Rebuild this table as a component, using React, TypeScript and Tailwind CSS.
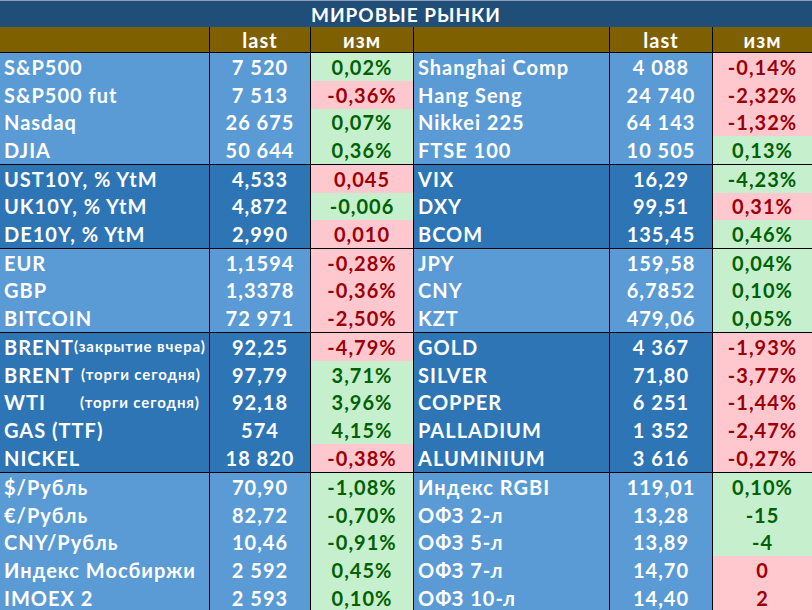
import React from "react";

type Row = {
  name: React.ReactNode;
  last: string;
  chg: string;
  up: boolean;
};

type Group = {
  dark: boolean;
  height: string;
  left: Row[];
  right: Row[];
};

const groups: Group[] = [
  {
    dark: false,
    height: "h-[112px]",
    left: [
      { name: "S&P500", last: "7 520", chg: "0,02%", up: true },
      { name: "S&P500 fut", last: "7 513", chg: "-0,36%", up: false },
      { name: "Nasdaq", last: "26 675", chg: "0,07%", up: true },
      { name: "DJIA", last: "50 644", chg: "0,36%", up: true },
    ],
    right: [
      { name: "Shanghai Comp", last: "4 088", chg: "-0,14%", up: false },
      { name: "Hang Seng", last: "24 740", chg: "-2,32%", up: false },
      { name: "Nikkei 225", last: "64 143", chg: "-1,32%", up: false },
      { name: "FTSE 100", last: "10 505", chg: "0,13%", up: true },
    ],
  },
  {
    dark: true,
    height: "h-[84px]",
    left: [
      { name: "UST10Y, % YtM", last: "4,533", chg: "0,045", up: false },
      { name: "UK10Y, % YtM", last: "4,872", chg: "-0,006", up: true },
      { name: "DE10Y, % YtM", last: "2,990", chg: "0,010", up: false },
    ],
    right: [
      { name: "VIX", last: "16,29", chg: "-4,23%", up: true },
      { name: "DXY", last: "99,51", chg: "0,31%", up: false },
      { name: "BCOM", last: "135,45", chg: "0,46%", up: true },
    ],
  },
  {
    dark: false,
    height: "h-[84px]",
    left: [
      { name: "EUR", last: "1,1594", chg: "-0,28%", up: false },
      { name: "GBP", last: "1,3378", chg: "-0,36%", up: false },
      { name: "BITCOIN", last: "72 971", chg: "-2,50%", up: false },
    ],
    right: [
      { name: "JPY", last: "159,58", chg: "0,04%", up: true },
      { name: "CNY", last: "6,7852", chg: "0,10%", up: true },
      { name: "KZT", last: "479,06", chg: "0,05%", up: true },
    ],
  },
  {
    dark: true,
    height: "h-[140px]",
    left: [
      {
        name: (
          <>
            BRENT<span className="text-[15px] tracking-[0.9px]">(закрытие вчера)</span>
          </>
        ),
        last: "92,25",
        chg: "-4,79%",
        up: false,
      },
      {
        name: (
          <>
            BRENT<span className="ml-[7px] text-[15px] tracking-[0.9px]">(торги сегодня)</span>
          </>
        ),
        last: "97,79",
        chg: "3,71%",
        up: true,
      },
      {
        name: (
          <>
            WTI<span className="ml-[34px] text-[15px] tracking-[0.9px]">(торги сегодня)</span>
          </>
        ),
        last: "92,18",
        chg: "3,96%",
        up: true,
      },
      { name: "GAS (TTF)", last: "574", chg: "4,15%", up: true },
      { name: "NICKEL", last: "18 820", chg: "-0,38%", up: false },
    ],
    right: [
      { name: "GOLD", last: "4 367", chg: "-1,93%", up: false },
      { name: "SILVER", last: "71,80", chg: "-3,77%", up: false },
      { name: "COPPER", last: "6 251", chg: "-1,44%", up: false },
      { name: "PALLADIUM", last: "1 352", chg: "-2,47%", up: false },
      { name: "ALUMINIUM", last: "3 616", chg: "-0,27%", up: false },
    ],
  },
  {
    dark: false,
    height: "h-[140px]",
    left: [
      { name: "$/Рубль", last: "70,90", chg: "-1,08%", up: true },
      { name: "€/Рубль", last: "82,72", chg: "-0,70%", up: true },
      { name: "CNY/Рубль", last: "10,46", chg: "-0,91%", up: true },
      { name: "Индекс Мосбиржи", last: "2 592", chg: "0,45%", up: true },
      { name: "IMOEX 2", last: "2 593", chg: "0,10%", up: true },
    ],
    right: [
      { name: "Индекс RGBI", last: "119,01", chg: "0,10%", up: true },
      { name: "ОФЗ 2-л", last: "13,28", chg: "-15", up: true },
      { name: "ОФЗ 5-л", last: "13,89", chg: "-4", up: true },
      { name: "ОФЗ 7-л", last: "14,70", chg: "0", up: false },
      { name: "ОФЗ 10-л", last: "14,40", chg: "2", up: false },
    ],
  },
];

const cols = "grid grid-cols-[210px_101px_103px_196px_103px_99px]";

const Cells = ({ row, dark, edge }: { row: Row; dark: boolean; edge: boolean }) => {
  const blue = dark ? "bg-[#2e75b6]" : "bg-[#5b9bd5]";
  const chg = row.up ? "bg-[#c6efce] text-[#006100]" : "bg-[#ffc7ce] text-[#9c0006]";
  return (
    <>
      <div className={`${blue} flex items-center whitespace-nowrap border-r-[1.5px] border-black pl-[4px] text-white`}>
        {row.name}
      </div>
      <div className={`${blue} flex items-center justify-center border-r-[1.5px] border-black text-white`}>
        {row.last}
      </div>
      <div className={`${chg} flex items-center justify-center ${edge ? "border-r-[1.5px] border-black" : ""}`}>
        {row.chg}
      </div>
    </>
  );
};

export default function App() {
  return (
    <div className="h-[610px] w-[812px] overflow-hidden bg-white font-['Lato','Liberation_Sans',sans-serif] text-[20px] font-bold leading-none tracking-[1px]">
      {/* title */}
      <div className="flex h-[27px] items-center justify-center border-t border-[#8c9fb5] bg-[#1f4e79] text-[19px] text-white">
        МИРОВЫЕ РЫНКИ
      </div>

      {/* column header */}
      <div className={`${cols} h-[26px] border-b-[1.5px] border-black bg-[#7f6000] text-white`}>
        <div className="border-r-[1.5px] border-black" />
        <div className="flex items-center justify-center border-r-[1.5px] border-black">last</div>
        <div className="flex items-center justify-center border-r-[1.5px] border-black">изм</div>
        <div className="border-r-[1.5px] border-black" />
        <div className="flex items-center justify-center border-r-[1.5px] border-black">last</div>
        <div className="flex items-center justify-center">изм</div>
      </div>

      {groups.map((g, gi) => (
        <div
          key={gi}
          className={`${cols} ${g.height} auto-rows-fr border-b-[1.5px] border-black`}
        >
          {g.left.map((row, i) => (
            <React.Fragment key={i}>
              <Cells row={row} dark={g.dark} edge />
              <Cells row={g.right[i]} dark={g.dark} edge={false} />
            </React.Fragment>
          ))}
        </div>
      ))}
    </div>
  );
}
